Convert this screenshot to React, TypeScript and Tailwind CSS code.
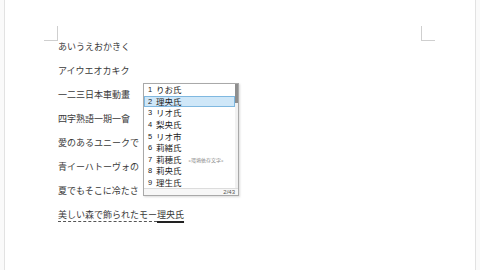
const lines = [
  "あいうえおかきく",
  "アイウエオカキク",
  "一二三日本車動畫",
  "四字熟語一期一會",
  "愛のあるユニークで",
  "青イーハトーヴォの",
  "夏でもそこに冷たさ",
];

const candidates = [
  { n: "1", text: "りお氏" },
  { n: "2", text: "理央氏" },
  { n: "3", text: "リオ氏" },
  { n: "4", text: "梨央氏" },
  { n: "5", text: "リオ市" },
  { n: "6", text: "莉緒氏" },
  { n: "7", text: "莉穂氏", note: "«環境依存文字»" },
  { n: "8", text: "莉央氏" },
  { n: "9", text: "理生氏" },
];

const jp = { fontFamily: '"Noto Sans CJK JP", sans-serif' };

const CandidateList = () => (
  <div className="absolute left-[138px] top-[83px] flex w-[96px] flex-col border border-[#a9a9a9] bg-white shadow-[1px_1px_2px_rgba(0,0,0,0.15)]">
    <div className="flex">
      <div className="flex flex-1 flex-col">
        {candidates.map((c, i) => (
          <div
            key={c.n}
            className={`flex h-[11.6px] items-center gap-[3px] pl-[3px] text-[8.5px] leading-[9px] text-[#222] ${
              i === 1 ? "border border-[#7fb8e0] bg-[#cfe7f8]" : "border border-transparent"
            }`}
          >
            <span className="w-[5px] text-[7.5px]" style={{ fontFamily: '"Liberation Sans", sans-serif' }}>
              {c.n}
            </span>
            <span style={jp}>{c.text}</span>
            {c.note && (
              <span className="ml-[4px] text-[5px] text-[#8a8a8a]" style={jp}>
                {c.note}
              </span>
            )}
          </div>
        ))}
      </div>
      <div className="w-[3px] bg-[#f1f1f1]">
        <div className="h-[19px] bg-[#8e8e8e]" />
      </div>
    </div>
    <div className="flex h-[7px] items-center justify-end border-t border-[#dcdcdc] bg-[#f7f7f7] pr-[3px] text-[6px] leading-none text-[#555]" style={{ fontFamily: '"Liberation Sans", sans-serif' }}>
      2/43
    </div>
  </div>
);

export default function App() {
  return (
    <div className="flex h-[270px] w-[480px] justify-center overflow-hidden bg-[#fafafa]">
      <div className="relative h-full w-[472px] border-x border-[#e2e2e2] bg-white">
        {/* margin corner marks */}
        <div className="absolute left-[39px] top-[26px] h-[15px] w-[14px] border-r border-b border-[#cfcfcf]" />
        <div className="absolute left-[416px] top-[26px] h-[15px] w-[14px] border-l border-b border-[#cfcfcf]" />

        <div className="flex flex-col pl-[53px] pt-[35px] text-[9px] leading-[24px] text-[#3a3a3a]" style={jp}>
          {lines.map((l) => (
            <div key={l} className="whitespace-nowrap">
              {l}
            </div>
          ))}
          <div className="flex whitespace-nowrap">
            <span className="underline decoration-dashed decoration-[#555] underline-offset-[3px]">美しい森で飾られたモー</span>
            <span className="underline decoration-[#222] decoration-[1.5px] underline-offset-[3px]">理央氏</span>
          </div>
        </div>

        <CandidateList />
      </div>
    </div>
  );
}
